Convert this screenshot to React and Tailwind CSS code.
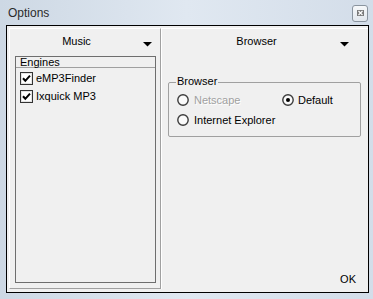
import React from "react";

const font = { fontFamily: '"Liberation Sans", Arial, sans-serif' };

function Arrow({ className }) {
  return (
    <svg width="9" height="5" viewBox="0 0 9 5" className={className}>
      <polygon points="0,0 9,0 4.5,4.6" fill="#000" />
    </svg>
  );
}

function Check() {
  return (
    <svg width="13" height="13" viewBox="0 0 13 13" className="shrink-0">
      <rect x="0.5" y="0.5" width="12" height="12" fill="#fff" stroke="#333" />
      <rect x="1.5" y="1.5" width="10" height="10" fill="none" stroke="#e3e3e3" />
      <path d="M3 6.3 L5.3 8.8 L10 3.6" fill="none" stroke="#000" strokeWidth="2" />
    </svg>
  );
}

function Radio({ checked }) {
  return (
    <svg width="12" height="12" viewBox="0 0 12 12" className="shrink-0">
      <circle cx="6" cy="6" r="5.2" fill="#fafafa" stroke="#3c3c3c" strokeWidth="1.4" />
      {checked && <circle cx="6" cy="6" r="2" fill="#000" />}
    </svg>
  );
}

export default function App() {
  return (
    <div
      className="w-[373px] h-[299px] flex flex-col bg-linear-to-r from-[#cdd8e4] via-[#e0e8f1] to-[#d3dde9] text-[11px] leading-[13px] text-black"
      style={font}
    >
      <div className="h-[25px] flex items-center justify-between pl-[8px] pr-[5px]">
        <span className="text-[12px] leading-[15px] text-[#2a2a2a] pt-[1px]">Options</span>
        <div className="w-[16px] h-[17px] mt-[1px] border border-[#8a949f] rounded-[3px] bg-linear-to-b from-[#f6f8fa] to-[#e2e7ed] flex items-center justify-center">
          <svg width="7" height="6" viewBox="0 0 7 6">
            <rect x="0" y="0" width="7" height="6" fill="#7a7a7a" />
            <path d="M1.5 1 L5.5 5 M5.5 1 L1.5 5" stroke="#ffffff" strokeWidth="1.2" />
          </svg>
        </div>
      </div>

      <div className="ml-[6px] w-[363px] h-[268px] border border-black bg-[#f0f0f0] flex pt-[2px] pl-[2px] pb-[3px]">
        <div className="w-[152px] h-full flex flex-col border-t border-l border-t-white border-l-white border-r border-b border-r-[#a0a0a0] border-b-[#a0a0a0]">
          <div className="h-[27px] flex items-center shrink-0">
            <span className="flex-1 text-center mb-[2px]">Music</span>
            <Arrow className="mr-[8px] mt-[3px]" />
          </div>
          <div className="flex-1 ml-[5px] mr-[4px] mb-[5px] border border-[#6e6e6e] flex flex-col">
            <div className="h-[10px] leading-[10px] pl-[4px] border-b border-[#a0a0a0] box-content">Engines</div>
            <div className="pt-[1px] pl-[4px]">
              <div className="h-[18px] flex items-center gap-[3px]">
                <Check />
                <span>eMP3Finder</span>
              </div>
              <div className="h-[18px] flex items-center gap-[3px]">
                <Check />
                <span>Ixquick MP3</span>
              </div>
            </div>
          </div>
        </div>

        <div className="w-[207px] h-full flex flex-col border-t border-l border-white">
          <div className="h-[27px] flex items-center shrink-0">
            <span className="flex-1 text-center pl-[11px] mb-[2px]">Browser</span>
            <Arrow className="mr-[19px] mt-[3px]" />
          </div>
          <div className="relative ml-[6px] mt-[26px] w-[193px] border border-[#a0a0a0] rounded-[2px] pt-[7px] pb-[6px] pl-[8px]">
            <span className="absolute left-[7px] top-[-8px] px-[1px] bg-[#f0f0f0]">Browser</span>
            <div className="grid grid-cols-[105px_1fr]">
              <div className="h-[20px] flex items-center gap-[5px]">
                <Radio />
                <span className="text-[#a0a0a0] [text-shadow:1px_1px_0_#ffffff]">Netscape</span>
              </div>
              <div className="h-[20px] flex items-center gap-[4px]">
                <Radio checked />
                <span>Default</span>
              </div>
              <div className="h-[20px] flex items-center gap-[5px] col-span-2">
                <Radio />
                <span>Internet Explorer</span>
              </div>
            </div>
          </div>
          <div className="flex-1" />
          <div className="h-[18px] mb-[1px] flex items-center justify-end pr-[12px]">
            <span>OK</span>
          </div>
        </div>
      </div>
    </div>
  );
}
